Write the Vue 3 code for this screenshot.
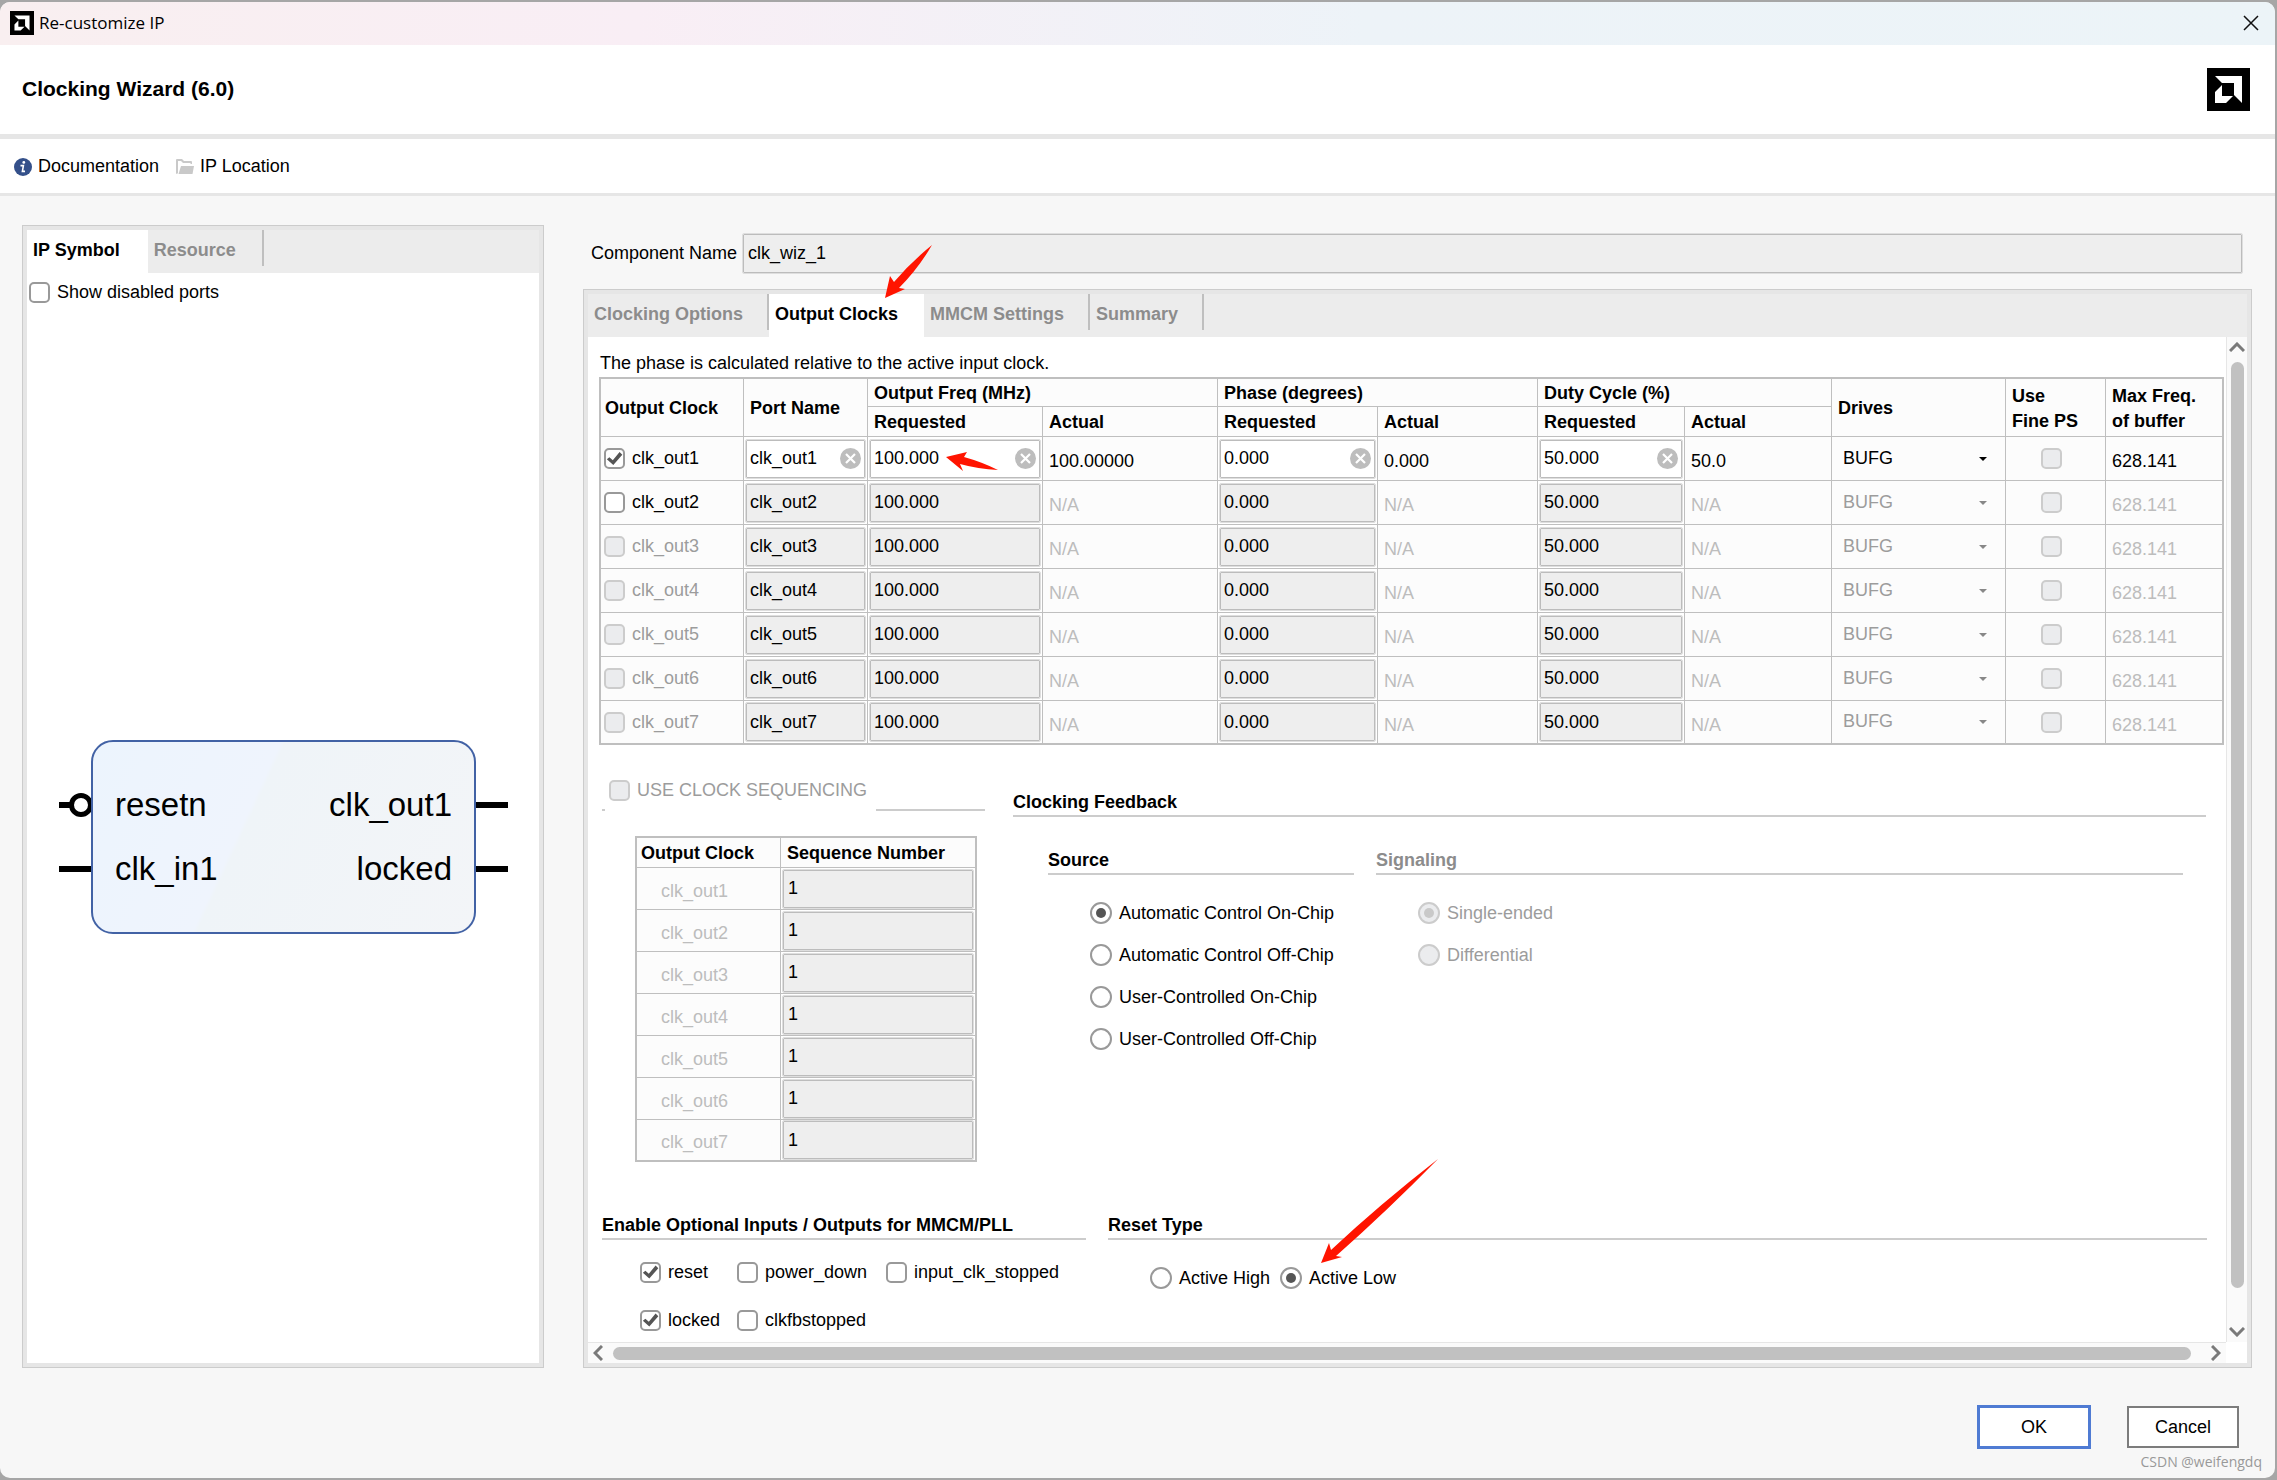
<script setup>
import { ref, reactive } from 'vue'

const componentName = ref('clk_wiz_1')
const showDisabled = ref(false)
const useSequencing = ref(false)
const source = ref('Automatic Control On-Chip')
const signaling = ref('Single-ended')
const resetType = ref('Active Low')

const tabs = ['Clocking Options', 'Output Clocks', 'MMCM Settings', 'Summary']
const activeTab = ref('Output Clocks')

const clocks = reactive(
  [1, 2, 3, 4, 5, 6, 7].map((n) => ({
    n,
    name: `clk_out${n}`,
    port: `clk_out${n}`,
    on: n === 1,
    selectable: n <= 2,
    freq: '100.000',
    freqActual: n === 1 ? '100.00000' : 'N/A',
    phase: '0.000',
    phaseActual: n === 1 ? '0.000' : 'N/A',
    duty: '50.000',
    dutyActual: n === 1 ? '50.0' : 'N/A',
    drives: 'BUFG',
    finePs: false,
    maxFreq: '628.141',
    sequence: '1',
  })),
)

const groups = [
  { value: 'freq', actual: 'freqActual', label: 'Requested frequency' },
  { value: 'phase', actual: 'phaseActual', label: 'Requested phase' },
  { value: 'duty', actual: 'dutyActual', label: 'Requested duty cycle' },
]

const sources = [
  'Automatic Control On-Chip',
  'Automatic Control Off-Chip',
  'User-Controlled On-Chip',
  'User-Controlled Off-Chip',
]

const ports = reactive([
  { name: 'reset', on: true },
  { name: 'power_down', on: false },
  { name: 'input_clk_stopped', on: false },
  { name: 'locked', on: true },
  { name: 'clkfbstopped', on: false },
])
</script>

<template>
  <div class="desktop">
    <div class="window">
      <header class="titlebar">
        <svg class="app-icon" viewBox="0 0 43 43" aria-hidden="true">
          <rect width="43" height="43" />
          <path fill="#fff" d="M8 8H35V35L27 27V15H15ZM15 17V28H26L19 35H8V24Z" />
        </svg>
        <span class="titlebar-text">Re-customize IP</span>
        <button class="close" aria-label="Close">
          <svg viewBox="0 0 16 16" width="16" height="16">
            <path d="M1 1L15 15M15 1L1 15" stroke="#111" stroke-width="1.5" />
          </svg>
        </button>
      </header>

      <div class="heading">
        <h1>Clocking Wizard (6.0)</h1>
        <svg class="brand" viewBox="0 0 43 43" role="img" aria-label="Logo">
          <rect width="43" height="43" />
          <path fill="#fff" d="M8 8H35V35L27 27V15H15ZM15 17V28H26L19 35H8V24Z" />
        </svg>
      </div>

      <nav class="toolbar">
        <a href="#">
          <svg viewBox="0 0 18 18" width="18" height="18" aria-hidden="true">
            <circle cx="9" cy="9" r="9" fill="#34508a" />
            <circle cx="9.8" cy="4.400" r="1.400" fill="#fff" />
            <path d="M6.500 7.600H9.400L8.400 13.400H11" fill="none" stroke="#fff" stroke-width="1.600" />
          </svg>
          <span>Documentation</span>
        </a>
        <a href="#">
          <svg viewBox="0 0 18 18" width="18" height="18" aria-hidden="true">
            <path
              d="M0 2Q0 1 1 1H6L8 3H15Q16 3 16 4V6H14.500V5H7L5 3H2V15L1 16Q0 16 0 15Z"
              fill="#c9c9c9"
            />
            <path d="M5 8H18L16.500 16H2.500Z" fill="#c9c9c9" />
          </svg>
          <span>IP Location</span>
        </a>
      </nav>

      <main class="body">
        <section class="panel symbol-panel">
          <div class="tabs">
            <button class="tab active">IP Symbol</button>
            <button class="tab">Resource</button>
          </div>
          <label class="check show-disabled">
            <input v-model="showDisabled" type="checkbox" />
            <span>Show disabled ports</span>
          </label>
          <div class="symbol-area">
            <div class="pins">
              <svg viewBox="0 0 32 26" width="32" height="26">
                <path d="M0 13H14" stroke="#000" stroke-width="6" />
                <circle cx="22" cy="13" r="9.500" fill="#fff" stroke="#000" stroke-width="5" />
              </svg>
              <svg viewBox="0 0 32 26" width="32" height="26">
                <path d="M0 13H32" stroke="#000" stroke-width="6" />
              </svg>
            </div>
            <div class="block">
              <div class="block-row"><span>resetn</span><span>clk_out1</span></div>
              <div class="block-row"><span>clk_in1</span><span>locked</span></div>
            </div>
            <div class="pins">
              <svg viewBox="0 0 32 26" width="32" height="26">
                <path d="M0 13H32" stroke="#000" stroke-width="6" />
              </svg>
              <svg viewBox="0 0 32 26" width="32" height="26">
                <path d="M0 13H32" stroke="#000" stroke-width="6" />
              </svg>
            </div>
          </div>
        </section>

        <div class="config">
          <div class="name-row">
            <label for="component-name">Component Name</label>
            <input id="component-name" v-model="componentName" class="field" type="text" disabled />
          </div>

          <section class="panel config-panel">
            <div class="tabs">
              <button
                v-for="tab in tabs"
                :key="tab"
                class="tab"
                :class="{ active: tab === activeTab }"
                @click="activeTab = tab"
              >
                {{ tab }}
                <svg
                  v-if="tab === 'Output Clocks'"
                  class="mark mark-tab"
                  viewBox="0 0 47 53"
                  width="47"
                  height="53"
                >
                  <path d="M0 53L5 31L9 37Q26 17 47 0Q33 24 14 43L20 44Z" />
                </svg>
              </button>
            </div>

            <div class="scroller">
              <div class="content">
                <p class="note">The phase is calculated relative to the active input clock.</p>

                <table class="grid clocks">
                  <colgroup>
                    <col class="w-clock" />
                    <col class="w-port" />
                    <col class="w-freq" />
                    <col class="w-freq" />
                    <col class="w-phase" />
                    <col class="w-phase" />
                    <col class="w-duty" />
                    <col class="w-duty" />
                    <col class="w-drives" />
                    <col class="w-fine" />
                    <col class="w-max" />
                  </colgroup>
                  <thead>
                    <tr class="head-top">
                      <th rowspan="2" class="tight">Output Clock</th>
                      <th rowspan="2">Port Name</th>
                      <th colspan="2">Output Freq (MHz)</th>
                      <th colspan="2">Phase (degrees)</th>
                      <th colspan="2">Duty Cycle (%)</th>
                      <th rowspan="2">Drives</th>
                      <th rowspan="2">Use<br />Fine PS</th>
                      <th rowspan="2">Max Freq.<br />of buffer</th>
                    </tr>
                    <tr class="head-sub">
                      <template v-for="g in groups" :key="g.value">
                        <th>Requested</th>
                        <th>Actual</th>
                      </template>
                    </tr>
                  </thead>
                  <tbody>
                    <tr v-for="c in clocks" :key="c.n">
                      <td>
                        <label class="check clock-check">
                          <input v-model="c.on" type="checkbox" :disabled="!c.selectable" />
                          <span>{{ c.name }}</span>
                        </label>
                      </td>
                      <td class="edit">
                        <div class="cell">
                          <input
                            v-model="c.port"
                            class="field"
                            type="text"
                            aria-label="Port name"
                            :disabled="!c.on"
                          />
                          <button v-if="c.on" class="clear" aria-label="Clear">
                            <svg viewBox="0 0 21 21" width="21" height="21">
                              <circle cx="10.500" cy="10.500" r="10.500" fill="#bdbdbd" />
                              <path d="M6 6L15 15M15 6L6 15" stroke="#fff" stroke-width="2.200" />
                            </svg>
                          </button>
                        </div>
                      </td>
                      <template v-for="g in groups" :key="g.value">
                        <td class="edit">
                          <div class="cell">
                            <input
                              v-model="c[g.value]"
                              class="field"
                              type="text"
                              :aria-label="g.label"
                              :disabled="!c.on"
                            />
                            <button v-if="c.on" class="clear" aria-label="Clear">
                              <svg viewBox="0 0 21 21" width="21" height="21">
                                <circle cx="10.500" cy="10.500" r="10.500" fill="#bdbdbd" />
                                <path d="M6 6L15 15M15 6L6 15" stroke="#fff" stroke-width="2.200" />
                              </svg>
                            </button>
                            <svg
                              v-if="c.on && g.value === 'freq'"
                              class="mark mark-freq"
                              viewBox="0 0 52 20"
                              width="52"
                              height="20"
                            >
                              <path d="M0 5L21 0L18 5Q36 10 52 18Q32 17 14 12L17 19Z" />
                            </svg>
                          </div>
                        </td>
                        <td class="value" :class="{ off: !c.on }">{{ c[g.actual] }}</td>
                      </template>
                      <td>
                        <div class="cell">
                          <select v-model="c.drives" aria-label="Drives" :disabled="!c.on">
                            <option>BUFG</option>
                          </select>
                          <svg
                            class="caret"
                            :class="{ off: !c.on }"
                            viewBox="0 0 8 4"
                            width="8"
                            height="4"
                          >
                            <path d="M0 0H8L4 4Z" />
                          </svg>
                        </div>
                      </td>
                      <td class="fine">
                        <input v-model="c.finePs" type="checkbox" aria-label="Use Fine PS" disabled />
                      </td>
                      <td class="value" :class="{ off: !c.on }">{{ c.maxFreq }}</td>
                    </tr>
                  </tbody>
                </table>

                <div class="middle">
                  <div class="sequencing">
                    <div class="seq-head">
                      <label class="check seq-toggle">
                        <input v-model="useSequencing" type="checkbox" disabled />
                        <span>USE CLOCK SEQUENCING</span>
                      </label>
                    </div>
                    <table class="grid seq">
                      <colgroup>
                        <col class="w-seq-clock" />
                        <col class="w-seq-num" />
                      </colgroup>
                      <thead>
                        <tr class="head-sub">
                          <th class="tight">Output Clock</th>
                          <th>Sequence Number</th>
                        </tr>
                      </thead>
                      <tbody>
                        <tr v-for="c in clocks" :key="c.n">
                          <td class="seq-name">{{ c.name }}</td>
                          <td class="edit">
                            <input
                              v-model="c.sequence"
                              class="field"
                              type="text"
                              aria-label="Sequence number"
                              disabled
                            />
                          </td>
                        </tr>
                      </tbody>
                    </table>
                  </div>

                  <div class="feedback">
                    <h2 class="feedback-title">Clocking Feedback</h2>
                    <div class="feedback-groups">
                      <div class="source">
                        <h2>Source</h2>
                        <div class="radios">
                          <label v-for="s in sources" :key="s" class="check">
                            <input v-model="source" type="radio" name="source" :value="s" />
                            <span>{{ s }}</span>
                          </label>
                        </div>
                      </div>
                      <div class="signaling">
                        <h2 class="dim">Signaling</h2>
                        <div class="radios">
                          <label v-for="s in ['Single-ended', 'Differential']" :key="s" class="check">
                            <input
                              v-model="signaling"
                              type="radio"
                              name="signaling"
                              :value="s"
                              disabled
                            />
                            <span>{{ s }}</span>
                          </label>
                        </div>
                      </div>
                    </div>
                  </div>
                </div>

                <div class="bottom">
                  <div class="optional">
                    <h2>Enable Optional Inputs / Outputs for MMCM/PLL</h2>
                    <div class="port-list">
                      <label v-for="p in ports" :key="p.name" class="check">
                        <input v-model="p.on" type="checkbox" />
                        <span>{{ p.name }}</span>
                      </label>
                    </div>
                  </div>
                  <div class="reset">
                    <h2>Reset Type</h2>
                    <div class="reset-list">
                      <label v-for="r in ['Active High', 'Active Low']" :key="r" class="check">
                        <input v-model="resetType" type="radio" name="reset" :value="r" />
                        <span>{{ r }}</span>
                        <svg
                          v-if="r === 'Active Low'"
                          class="mark mark-reset"
                          viewBox="0 0 117 104"
                          width="117"
                          height="104"
                        >
                          <path d="M0 104L8 84L10 91Q58 46 117 0Q66 52 15 97L21 98Z" />
                        </svg>
                      </label>
                    </div>
                  </div>
                </div>
              </div>

              <div class="vbar">
                <svg viewBox="0 0 16 10" width="16" height="10">
                  <path d="M1 9L8 2L15 9" />
                </svg>
                <div class="vtrack"><div class="thumb"></div></div>
                <svg viewBox="0 0 16 10" width="16" height="10">
                  <path d="M1 1L8 8L15 1" />
                </svg>
              </div>
              <div class="hbar">
                <svg viewBox="0 0 10 16" width="10" height="16">
                  <path d="M9 1L2 8L9 15" />
                </svg>
                <div class="htrack"><div class="thumb"></div></div>
                <svg viewBox="0 0 10 16" width="10" height="16">
                  <path d="M1 1L8 8L1 15" />
                </svg>
              </div>
            </div>
          </section>
        </div>
      </main>

      <footer class="actions">
        <button class="ok">OK</button>
        <button class="cancel">Cancel</button>
      </footer>
      <span class="watermark">CSDN @weifengdq</span>
    </div>
  </div>
</template>

<style>
body {
  margin: 0;
}
</style>

<style scoped>
* {
  box-sizing: border-box;
}

.desktop {
  display: flex;
  min-height: 100vh;
  padding: 2px 2px 2px 0;
  background: #a6a6a6;
  font-family: 'Liberation Sans', Arial, sans-serif;
  font-size: 18px;
  color: #000;
}

.window {
  position: relative;
  display: flex;
  flex: 1;
  flex-direction: column;
  min-width: 0;
  overflow: hidden;
  border-radius: 10px;
  background: #f7f7f7;
}

button,
input,
select {
  font: inherit;
  color: inherit;
}

button {
  margin: 0;
  padding: 0;
  border: 0;
  background: none;
}

h1,
h2,
p {
  margin: 0;
}

/* Window chrome */
.titlebar {
  display: flex;
  align-items: center;
  height: 43px;
  padding: 0 16px 2px 10px;
  background: linear-gradient(90deg, #f9eff0 0%, #f9eef5 28%, #edf3f8 60%, #ecf4f8 100%);
}

.app-icon {
  width: 24px;
  height: 24px;
  margin-right: 5px;
}

.titlebar-text {
  flex: 1;
  font-family: 'Open Sans', 'Noto Sans', sans-serif;
  font-size: 17px;
}

.close {
  display: flex;
}

.heading {
  display: flex;
  align-items: center;
  justify-content: space-between;
  height: 94px;
  padding: 0 25px 0 22px;
  border-bottom: 5px solid #e6e6e6;
  background: #fff;
}

h1 {
  padding-bottom: 2px;
  font-size: 21px;
  line-height: 24px;
}

.brand {
  width: 43px;
  height: 43px;
}

.toolbar {
  display: flex;
  align-items: center;
  gap: 17px;
  height: 57px;
  padding: 1px 14px 0;
  border-bottom: 3px solid #e6e6e6;
  background: #fff;
}

.toolbar a {
  display: flex;
  align-items: center;
  gap: 6px;
  color: inherit;
  text-decoration: none;
}

/* Panels and tabs */
.body {
  display: flex;
  flex: 1;
  gap: 39px;
  padding: 29px 23px 0 22px;
}

.panel {
  display: flex;
  flex-direction: column;
  padding: 4px;
  border: 1px solid #ccc;
  background: #fff;
  box-shadow: inset 0 0 0 4px #e6e6e6;
}

.symbol-panel {
  flex: 0 0 522px;
}

.tabs {
  display: flex;
  height: 43px;
  background: #ececec;
}

.tab {
  position: relative;
  padding: 0 26px 2px 6px;
  font-weight: bold;
  color: #8c8c8c;
}

.symbol-panel .tab {
  padding-right: 28px;
}

.tab::after {
  position: absolute;
  top: 0;
  right: 0;
  width: 2px;
  height: 36px;
  background: #bfbfbf;
  content: '';
}

.tab.active {
  background: #fff;
  color: #000;
}

.tab.active::after {
  display: none;
}

/* Check boxes and radio buttons */
.check {
  position: relative;
  display: flex;
  align-items: center;
  gap: 7px;
  white-space: nowrap;
}

input[type='checkbox'],
input[type='radio'] {
  position: relative;
  flex: none;
  width: 21px;
  height: 21px;
  margin: 0;
  appearance: none;
  border: 2px solid #999;
  border-radius: 5px;
  background: #fff;
}

input[type='radio'] {
  width: 22px;
  height: 22px;
  border-radius: 50%;
}

input[type='checkbox']:checked::before {
  position: absolute;
  inset: 0;
  background: #555;
  clip-path: polygon(5% 55%, 20% 42%, 40% 60%, 80% 12%, 96% 28%, 43% 88%);
  content: '';
}

input[type='radio']:checked::before {
  position: absolute;
  inset: 4px;
  border-radius: 50%;
  background: #555;
  content: '';
}

input[type='checkbox']:disabled,
input[type='radio']:disabled {
  border-color: #ccc;
  background: #ebecee;
}

input[type='radio']:disabled::before {
  background: #c9c9c9;
}

input:disabled + span {
  color: #9c9c9c;
}

.show-disabled {
  height: 38px;
  padding-left: 2px;
}

/* IP symbol */
.symbol-area {
  display: flex;
  flex: 1;
  align-items: center;
  padding-left: 32px;
}

.pins {
  display: flex;
  flex-direction: column;
  gap: 38px;
}

.pins svg {
  display: block;
}

.block {
  display: flex;
  flex-direction: column;
  justify-content: center;
  width: 385px;
  height: 194px;
  padding: 0 22px;
  border: 2px solid #4262a5;
  border-radius: 22px;
  background: linear-gradient(115deg, #ecf4fd 0%, #eff4fd 40%, #eff4f8 41%, #f3f5f8 100%);
  font-size: 33px;
  line-height: 64px;
}

.block-row {
  display: flex;
  justify-content: space-between;
}

/* Configuration */
.config {
  display: flex;
  flex: 1;
  flex-direction: column;
  min-width: 0;
}

.name-row {
  display: flex;
  align-items: center;
  gap: 6px;
  height: 56px;
  margin-bottom: 8px;
  padding: 0 10px 0 8px;
  white-space: nowrap;
}

.field {
  width: 100%;
  min-width: 0;
  height: 39px;
  margin: 0;
  padding: 0 4px;
  border: 1px solid #bcbcbc;
  border-radius: 1px;
  outline: 1px solid #dedede;
  background: #fff;
}

.name-row .field {
  flex: 1;
}

.field:disabled {
  background: #eee;
  color: #000;
}

.config-panel {
  flex: 1;
}

.scroller {
  display: grid;
  flex: 1;
  grid-template-columns: minmax(0, 1fr) 21px;
  grid-template-rows: 1fr 21px;
}

.content {
  padding: 14px 2px 0 11px;
}

.note {
  margin-bottom: 2px;
  padding-left: 1px;
  line-height: 24px;
}

.grid {
  border: 2px solid #bfbfbf;
  border-spacing: 0;
  table-layout: fixed;
  background: #fcfcfc;
}

.grid th,
.grid td {
  padding: 0;
  border-right: 1px solid #bfbfbf;
  border-bottom: 1px solid #bfbfbf;
  text-align: left;
}

.grid th {
  padding-top: 2px;
  padding-left: 6px;
  line-height: 25px;
  white-space: nowrap;
}

.grid th.tight {
  padding-left: 4px;
}

.grid tr > :last-child {
  border-right: 0;
}

.grid .head-sub > th:last-child {
  border-right: 1px solid #bfbfbf;
}

.grid.seq .head-sub > th:last-child {
  border-right: 0;
}

.grid tbody tr:last-child td {
  border-bottom: 0;
}

.clocks {
  width: 100%;
}

.w-clock { width: 143px; }
.w-port { width: 124px; }
.w-freq { width: 175px; }
.w-phase { width: 160px; }
.w-duty { width: 147px; }
.w-drives { width: 174px; }
.w-fine { width: 100px; }
.w-max { width: 116px; }
.w-seq-clock { width: 144px; }
.w-seq-num { width: 194px; }

.head-top { height: 28px; }
.head-sub { height: 30px; }
.clocks tbody tr { height: 44px; }
.clocks tbody tr:last-child { height: 42px; }
.seq tbody tr { height: 42px; }
.seq tbody tr:last-child { height: 40px; }

.grid td.edit {
  padding: 0 2px;
  background: #fff;
}

.cell {
  position: relative;
  display: flex;
  align-items: center;
}

.cell .field {
  height: 38px;
  padding-left: 3px;
}

.clear {
  position: absolute;
  right: 4px;
  display: flex;
}

.grid td.value {
  padding-top: 6px;
  padding-left: 6px;
}

.grid td.off {
  color: #bdbdbd;
}

.clock-check {
  padding-left: 3px;
}

select {
  width: 100%;
  height: 38px;
  padding: 0 0 2px 11px;
  border: 0;
  appearance: none;
  background: transparent;
}

select:disabled {
  color: #9c9c9c;
  opacity: 1;
}

.caret {
  position: absolute;
  right: 18px;
}

.caret.off {
  fill: #888;
}

.grid td.fine {
  padding-right: 8px;
}

.fine input {
  display: block;
  margin: 0 auto;
}

/* Sequencing and feedback */
.middle {
  display: flex;
  gap: 28px;
  margin-top: 28px;
  padding: 0 18px 0 3px;
}

.sequencing {
  flex: 0 0 383px;
}

.seq-head {
  display: flex;
  height: 38px;
  border-bottom: 2px solid #ccc;
}

.seq-toggle {
  height: 38px;
  margin-left: 3px;
  padding: 0 9px 3px 4px;
  background: #fff;
}

.seq {
  width: 342px;
  margin: 25px 0 0 33px;
}

.seq .field {
  display: block;
  height: 38px;
}

.grid td.seq-name {
  padding-top: 5px;
  padding-left: 24px;
  color: #bdbdbd;
}

.feedback {
  flex: 1;
}

h2 {
  border-bottom: 2px solid #ccc;
  font-size: 18px;
  line-height: 26px;
}

h2.dim {
  color: #8c8c8c;
}

.feedback-title {
  padding-top: 16px;
}

.feedback-groups {
  display: flex;
  gap: 22px;
  margin-top: 30px;
  padding: 0 23px 0 35px;
}

.source {
  flex: 0 0 306px;
}

.signaling {
  flex: 1;
}

.radios {
  display: flex;
  flex-direction: column;
  margin-top: 17px;
  padding-left: 42px;
}

.radios .check {
  height: 42px;
}

/* Optional ports and reset */
.bottom {
  display: flex;
  gap: 22px;
  margin-top: 50px;
  padding: 0 17px 0 3px;
}

.optional {
  flex: 0 0 484px;
}

.port-list {
  display: grid;
  grid-template-columns: 97px 149px 1fr;
  row-gap: 8px;
  margin-top: 12px;
  padding-left: 38px;
}

.port-list .check {
  height: 40px;
}

.reset {
  flex: 1;
}

.reset-list {
  display: flex;
  gap: 10px;
  margin-top: 18px;
  padding-left: 42px;
}

.reset-list .check {
  height: 40px;
}

/* Scroll bars */
.vbar,
.hbar {
  display: flex;
  align-items: center;
  background: #fafafa;
}

.vbar {
  flex-direction: column;
  padding: 5px 0;
  border-left: 1px solid #e6e6e6;
}

.hbar {
  padding: 0 5px;
  border-top: 1px solid #e6e6e6;
}

.vbar path,
.hbar path {
  fill: none;
  stroke: #7a7a7a;
  stroke-width: 3;
}

.vtrack {
  flex: 1;
  width: 13px;
  padding: 10px 0 39px;
}

.htrack {
  flex: 1;
  height: 13px;
  padding: 0 20px 0 10px;
}

.thumb {
  height: 100%;
  border-radius: 7px;
  background: #c1c1c1;
}

/* Red callout arrows */
.mark {
  position: absolute;
  z-index: 2;
  fill: #ff1400;
  pointer-events: none;
}

.mark-tab {
  top: -49px;
  left: 116px;
}

.mark-freq {
  top: 12px;
  left: 76px;
}

.mark-reset {
  bottom: 35px;
  left: 41px;
}

/* Footer */
.actions {
  display: flex;
  align-items: flex-start;
  justify-content: flex-end;
  gap: 36px;
  height: 110px;
  padding: 37px 36px 0 0;
}

.ok {
  width: 114px;
  height: 44px;
  border: 3px solid #4f7bd3;
  background: #fff;
}

.cancel {
  width: 112px;
  height: 42px;
  margin-top: 1px;
  border: 2px solid #7c7c7c;
  background: #fff;
}

.watermark {
  position: absolute;
  right: 13px;
  bottom: 6px;
  color: #999;
  font-family: 'Open Sans', 'Noto Sans', sans-serif;
  font-size: 14px;
  line-height: 20px;
}
</style>
